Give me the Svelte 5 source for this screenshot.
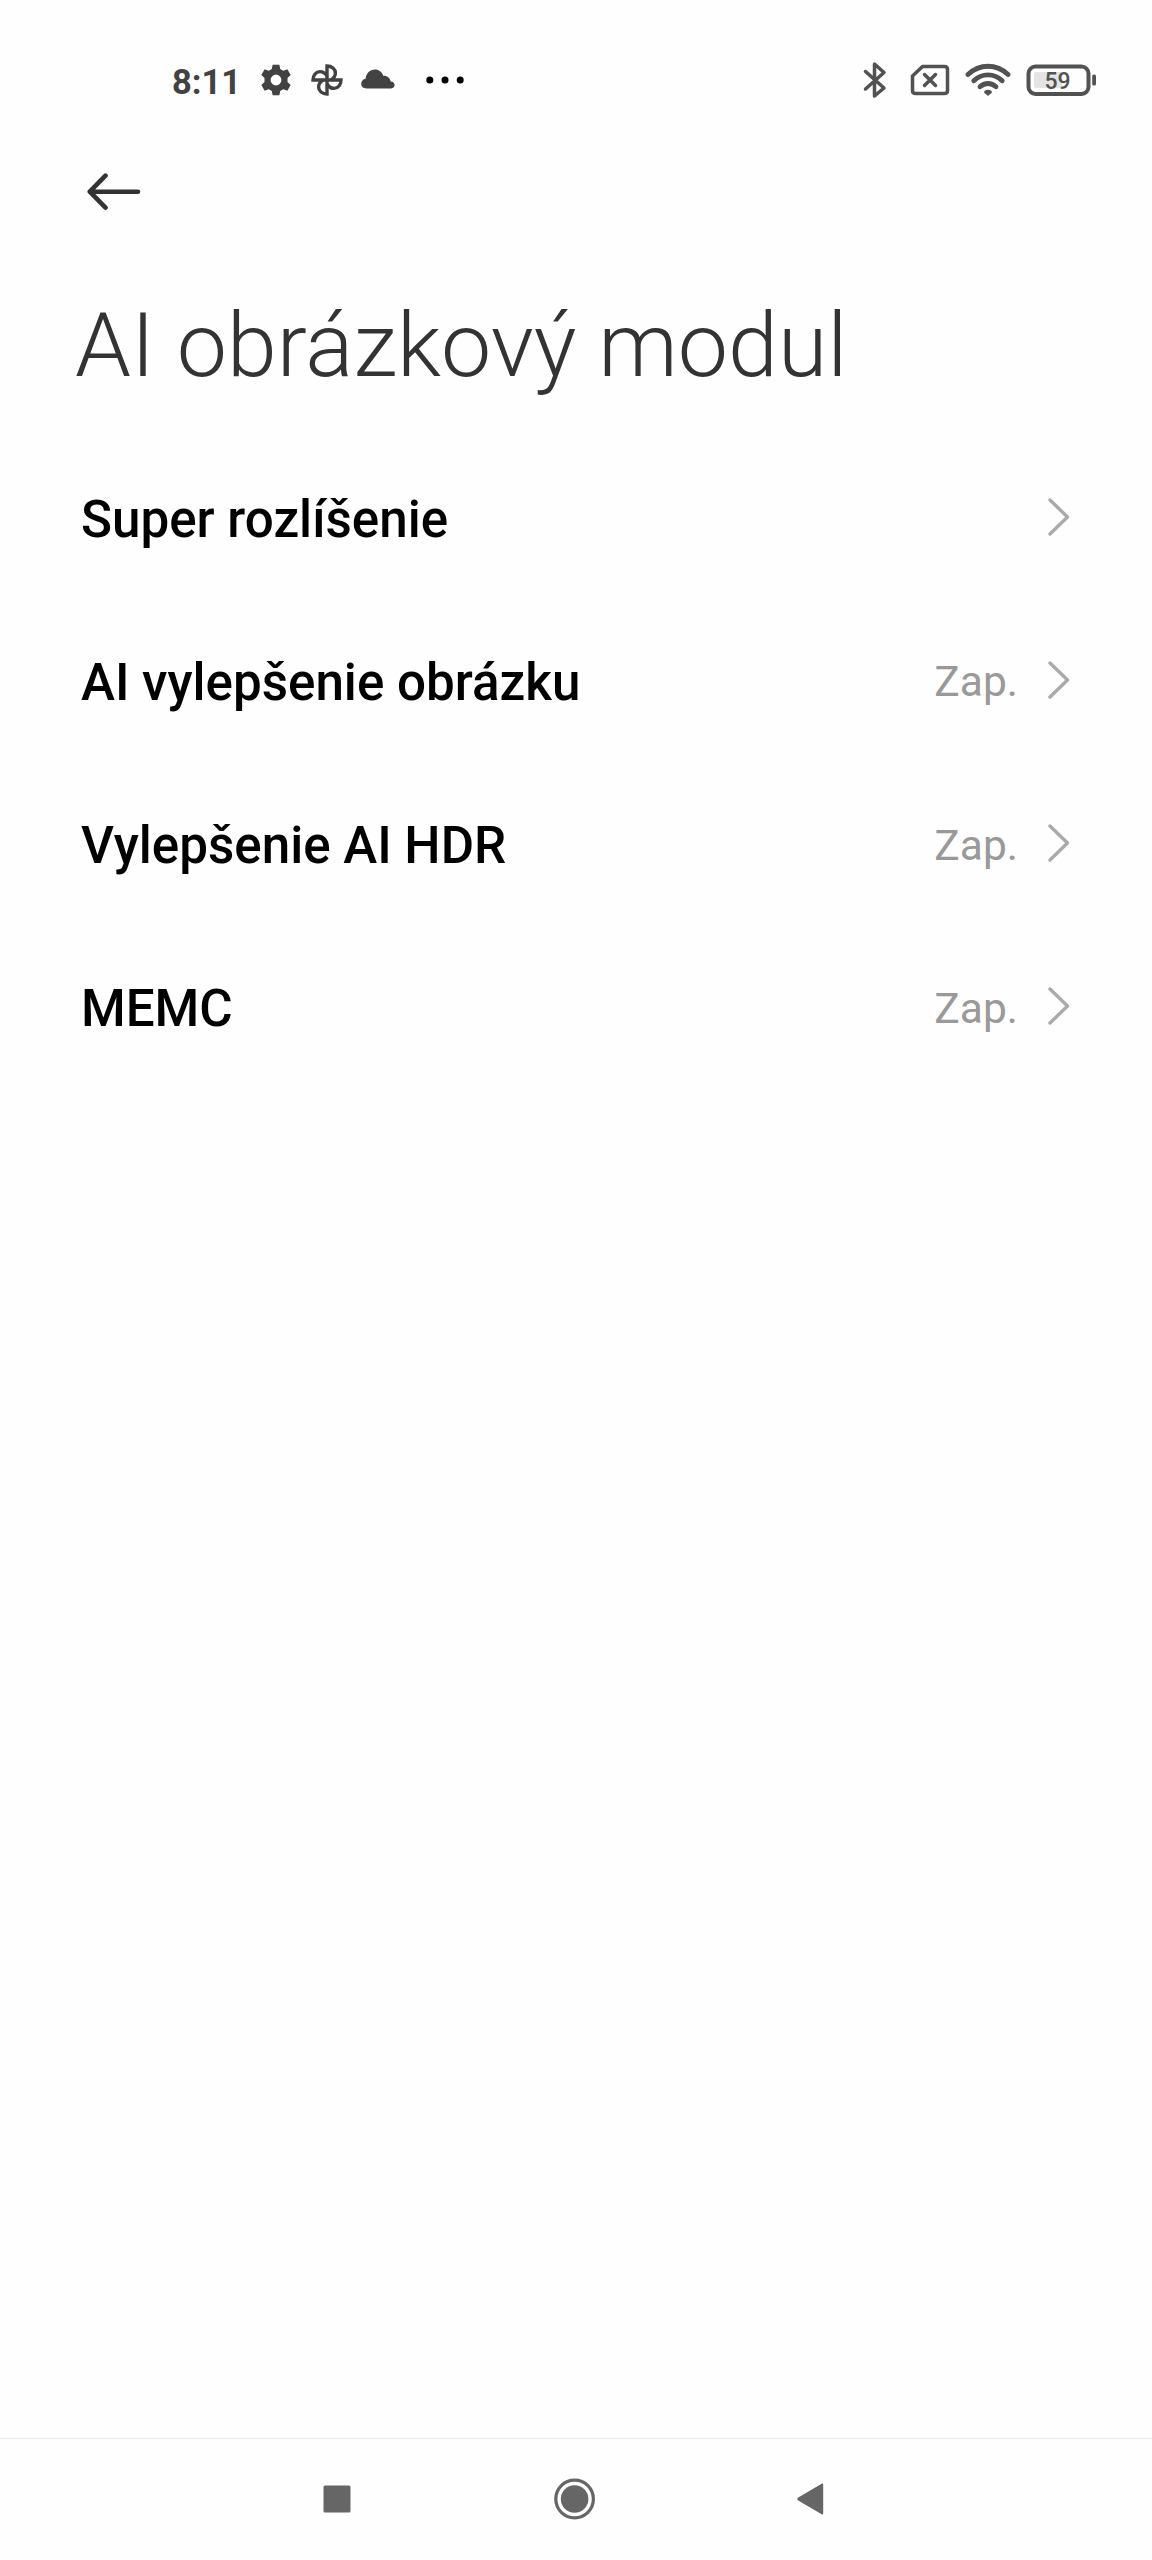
<script lang="ts">
	type Row = { label: string; value?: string };

	const time = '8:11';
	const battery = 59;
	const title = 'AI obrázkový modul';

	const rows: Row[] = [
		{ label: 'Super rozlíšenie' },
		{ label: 'AI vylepšenie obrázku', value: 'Zap.' },
		{ label: 'Vylepšenie AI HDR', value: 'Zap.' },
		{ label: 'MEMC', value: 'Zap.' }
	];

	// width of the battery fill, the inside of the body is 48 units wide
	const fillWidth = (battery / 100) * 48;
</script>

<div class="screen">
	<header class="status">
		<div class="left">
			<span class="time">{time}</span>
			<!-- settings -->
			<svg class="gear" width="32" height="32" viewBox="0 0 32 32">
				<path
					fill-rule="evenodd"
					d="M12.6 0.8H19.4L20.2 5L23.3 6.8L27.4 5.3L30.7 11.1L27.5 14V18L30.7 20.9L27.4 26.7L23.3 25.2L20.2 27L19.4 31.2H12.6L11.8 27L8.7 25.2L4.6 26.7L1.3 20.9L4.5 18V14L1.3 11.1L4.6 5.3L8.7 6.8L11.8 5ZM16 10.6A5.4 5.4 0 1 0 16 21.4A5.4 5.4 0 1 0 16 10.6Z"
				/>
			</svg>
			<!-- photos pinwheel, one blade turned four times -->
			<svg class="pinwheel" width="32" height="32" viewBox="0 0 32 32">
				{#each [0, 90, 180, 270] as angle}
					<path d="M16 16V2C20.8 2 24.4 5 24.4 9C24.4 12 22.6 14.4 20 16" transform="rotate({angle} 16 16)" />
				{/each}
			</svg>
			<svg class="cloud" width="34" height="20" viewBox="0 0 34 20">
				<path
					d="M5.4 19.4C2.4 19.4 0.2 17.5 0.2 14.7C0.2 12.2 2.1 10.2 4.6 9.8C5.2 4.4 9 0.5 14 0.5C17.8 0.5 20.9 2.9 22.3 6.7C26 6.3 29.2 9 29.6 12.6C32 12.8 33.6 14.1 33.6 16.1C33.6 18.1 32.1 19.4 30 19.4Z"
				/>
			</svg>
			<svg class="more" width="38" height="8" viewBox="0 0 38 8">
				<circle cx="3.8" cy="4" r="3.5" />
				<circle cx="19" cy="4" r="3.5" />
				<circle cx="34.2" cy="4" r="3.5" />
			</svg>
		</div>

		<div class="right">
			<svg class="line bluetooth" width="24" height="38" viewBox="0 0 24 38">
				<path d="M2.5 10.5L21 27L11.5 35V3L21 11.5L2.5 28" />
			</svg>
			<!-- no sim card -->
			<svg class="line sim" width="40" height="32" viewBox="0 0 40 32">
				<path d="M12.5 2.5H34.5Q37.5 2.5 37.5 5.5V26.5Q37.5 29.5 34.5 29.5H5.5Q2.5 29.5 2.5 26.5V12Z" />
				<path d="M14.5 10.5L25.5 21.5M25.5 10.5L14.5 21.5" />
			</svg>
			<svg class="wifi" width="46" height="34" viewBox="0 0 46 34">
				<path d="M3 11.5C14.5 0.5 31.5 0.5 43 11.5" />
				<path d="M8.8 17.7C16.8 9.9 29.2 9.9 37.2 17.7" />
				<path d="M15 23.8C19.6 19.4 26.4 19.4 31 23.8" />
				<path class="dot" d="M23 33L19 29.4C19 26 27 26 27 29.4Z" />
			</svg>
			<svg class="battery" width="72" height="32" viewBox="0 0 72 32">
				<rect class="fill" x="8" y="8" width={fillWidth} height="16" rx="2" />
				<rect class="body" x="2.5" y="2.5" width="60" height="27.5" rx="7" />
				<rect class="nub" x="66.2" y="10.5" width="3.8" height="11" rx="1.6" />
				<text x="31.6" y="24.6" text-anchor="middle">{battery}</text>
			</svg>
		</div>
	</header>

	<div class="toolbar">
		<button aria-label="Späť">
			<svg width="56" height="40" viewBox="0 0 56 40">
				<path d="M18.5 3.7L2.8 19.7L18.5 35.7M2.8 19.7H51" />
			</svg>
		</button>
	</div>

	<h1>{title}</h1>

	<ul>
		{#each rows as row}
			<li>
				<span class="label">{row.label}</span>
				{#if row.value}
					<span class="value">{row.value}</span>
				{/if}
				<svg class="chevron" width="22" height="38" viewBox="0 0 22 38">
					<path d="M2 2L19.5 19L2 36" />
				</svg>
			</li>
		{/each}
	</ul>

	<nav>
		<button aria-label="Posledné">
			<svg width="42" height="42" viewBox="0 0 42 42">
				<rect x="7.5" y="7.5" width="27" height="27" rx="1.5" />
			</svg>
		</button>
		<button aria-label="Domov">
			<svg width="42" height="42" viewBox="0 0 42 42">
				<circle class="ring" cx="21.6" cy="21" r="18.8" />
				<circle cx="21.6" cy="21" r="13.8" />
			</svg>
		</button>
		<button aria-label="Naspäť">
			<svg width="42" height="42" viewBox="0 0 42 42">
				<path d="M32.7 5.8Q34.2 5 34.2 6.8V35.2Q34.2 37 32.7 36.2L8.8 22.2Q7.6 21 8.8 19.8Z" />
			</svg>
		</button>
	</nav>
</div>

<style>
	:global(body) {
		margin: 0;
		background: #fefefe;
	}
	.screen {
		display: flex;
		flex-direction: column;
		width: 1152px;
		height: 2560px;
		background: #fefefe;
		font-family: Roboto, sans-serif;
	}
	svg {
		display: block;
		flex: none;
	}
	button {
		display: block;
		padding: 0;
		border: none;
		background: none;
	}

	.status {
		display: flex;
		justify-content: space-between;
		box-sizing: border-box;
		height: 160px;
		padding: 0 54px 0 172px;
	}
	.left,
	.right {
		display: flex;
		align-items: center;
		height: 160px;
	}
	.left {
		fill: #424242;
	}
	.time {
		width: 88px;
		padding-top: 3px;
		color: #424242;
		font-size: 34.5px;
		font-weight: 700;
		line-height: 40px;
	}
	.pinwheel {
		margin-left: 19px;
		fill: none;
		stroke: #424242;
		stroke-width: 3.4;
	}
	.cloud {
		margin: 0 0 3px 18px;
	}
	.more {
		margin-left: 31px;
		fill: #000;
	}
	.line {
		fill: none;
		stroke: #525252;
		stroke-width: 3.5;
		stroke-linecap: round;
		stroke-linejoin: round;
	}
	.sim {
		margin-left: 23px;
	}
	.wifi {
		margin-left: 15px;
		fill: none;
		stroke: #525252;
		stroke-width: 4.8;
		stroke-linecap: round;
	}
	.wifi .dot {
		fill: #525252;
		stroke: none;
	}
	.battery {
		margin-left: 15px;
	}
	.battery .fill {
		fill: #e4e4e4;
	}
	.battery .body {
		fill: none;
		stroke: #525252;
		stroke-width: 4;
	}
	.battery .nub,
	.battery text {
		fill: #525252;
	}
	.battery text {
		font-size: 23px;
		font-weight: 500;
	}

	.toolbar {
		display: flex;
		align-items: center;
		height: 64px;
		padding-left: 87px;
	}
	.toolbar path {
		fill: none;
		stroke: #333;
		stroke-width: 4.6;
		stroke-linecap: round;
		stroke-linejoin: round;
	}

	h1 {
		margin: 70px 0 0 75px;
		color: #333;
		font-size: 89.7px;
		font-weight: 300;
		line-height: 104px;
		white-space: nowrap;
	}

	ul {
		flex: 1;
		margin: 39px 0 0;
		padding: 0;
		list-style: none;
	}
	li {
		display: flex;
		align-items: center;
		box-sizing: border-box;
		height: 163.25px;
		padding: 0 82px 0 81px;
	}
	.label {
		flex: 1;
		padding-top: 1px;
		color: #000;
		font-size: 51.15px;
		font-weight: 500;
	}
	.value {
		color: #999;
		font-size: 42.5px;
	}
	.chevron {
		margin: 0 0 4px 30px;
	}
	.chevron path {
		fill: none;
		stroke: #aaa;
		stroke-width: 3.4;
		stroke-linecap: round;
		stroke-linejoin: round;
	}

	nav {
		display: flex;
		justify-content: space-between;
		align-items: center;
		box-sizing: border-box;
		height: 122px;
		padding: 0 321px 1px 316px;
		border-top: 1px solid #ececec;
	}
	nav svg {
		fill: #666;
	}
	nav .ring {
		fill: none;
		stroke: #666;
		stroke-width: 3.2;
	}
</style>
